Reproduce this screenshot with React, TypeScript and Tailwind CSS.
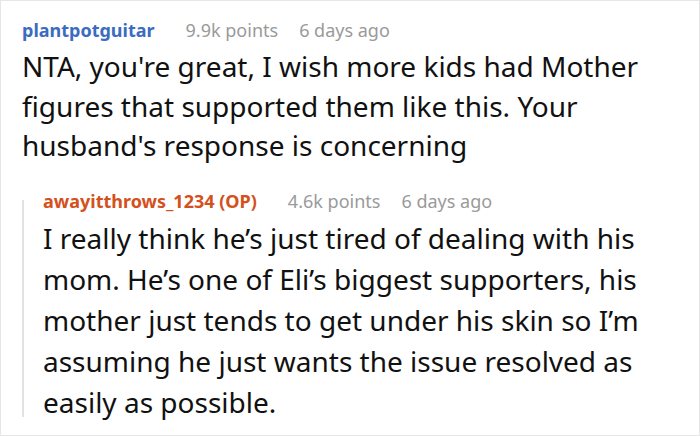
const font = { fontFamily: '"Noto Sans", "Open Sans", sans-serif' };

interface HeaderProps {
  author: string;
  authorClass: string;
  points: string;
  age: string;
}

function CommentHeader({ author, authorClass, points, age }: HeaderProps) {
  return (
    <div className="flex items-baseline text-[18px] leading-[24px]">
      <span className={`font-bold ${authorClass}`}>{author}</span>
      <span className="ml-[31px] text-[#9a9a9a]">{points}</span>
      <span className="ml-[21px] text-[#9a9a9a]">{age}</span>
    </div>
  );
}

function CommentBody({ lines, leading }: { lines: string[]; leading: string }) {
  return (
    <div className={`mt-[5px] text-[28px] text-[#111] ${leading}`}>
      {lines.map((l) => (
        <div key={l}>{l}</div>
      ))}
    </div>
  );
}

export default function App() {
  return (
    <div
      className="box-border h-[436px] w-[700px] overflow-hidden border border-[#e6e6e6] bg-white pl-[21px] pt-[17px]"
      style={font}
    >
      <CommentHeader
        author="plantpotguitar"
        authorClass="text-[#3a6cbf]"
        points="9.9k points"
        age="6 days ago"
      />
      <CommentBody
        leading="leading-[39.5px]"
        lines={[
          'NTA, you\'re great, I wish more kids had Mother',
          'figures that supported them like this. Your',
          'husband\'s response is concerning',
        ]}
      />

      <div className="mt-[23px] flex">
        <div className="mt-[11px] mb-[6px] w-[2px] shrink-0 bg-[#e2e2e2]" />
        <div className="ml-[19px]">
          <CommentHeader
            author="awayitthrows_1234 (OP)"
            authorClass="text-[#d4501c]"
            points="4.6k points"
            age="6 days ago"
          />
          <CommentBody
            leading="leading-[41px]"
            lines={[
              'I really think he’s just tired of dealing with his',
              'mom. He’s one of Eli’s biggest supporters, his',
              'mother just tends to get under his skin so I’m',
              'assuming he just wants the issue resolved as',
              'easily as possible.',
            ]}
          />
        </div>
      </div>
    </div>
  );
}
